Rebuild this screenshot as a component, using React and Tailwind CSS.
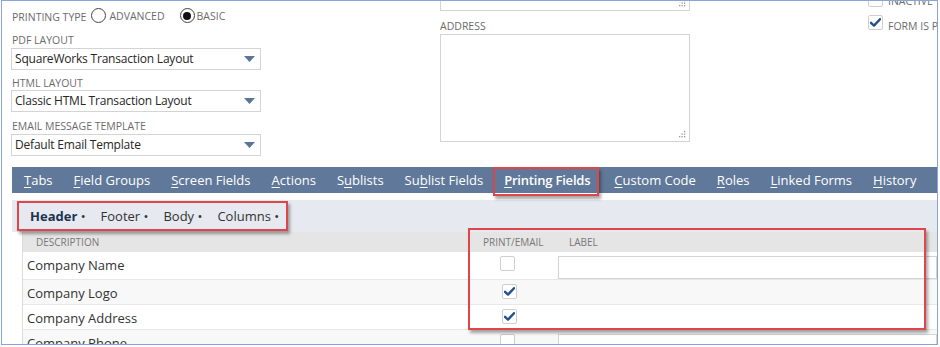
import React from "react";

const Check = () => (
  <svg width="11" height="9" viewBox="0 0 11 9" className="block">
    <path d="M1 4.8 L4 7.6 L10 1.2" fill="none" stroke="#24508f" strokeWidth="2.4" strokeLinecap="round" strokeLinejoin="round" />
  </svg>
);

const Box = ({ checked }) => (
  <div className="w-[15px] h-[15px] border border-[#cfcfcf] rounded-[2px] bg-white flex items-center justify-center shrink-0">
    {checked ? <Check /> : null}
  </div>
);

const Grip = () => (
  <svg width="7" height="7" viewBox="0 0 7 7" className="absolute right-[3px] bottom-[3px]">
    <rect x="5" y="0" width="1.3" height="1.3" fill="#999" />
    <rect x="5" y="2.5" width="1.3" height="1.3" fill="#999" />
    <rect x="2.5" y="2.5" width="1.3" height="1.3" fill="#999" />
    <rect x="5" y="5" width="1.3" height="1.3" fill="#999" />
    <rect x="2.5" y="5" width="1.3" height="1.3" fill="#999" />
    <rect x="0" y="5" width="1.3" height="1.3" fill="#999" />
  </svg>
);

const Select = ({ value }) => (
  <div className="w-[250px] h-[22px] border border-[#d4d4d4] bg-white flex items-center justify-between pl-[3px] pr-[5px] ml-[-1px]">
    <span className="text-[12px] tracking-[-0.2px] text-[#262626] leading-none">{value}</span>
    <svg width="11" height="6" viewBox="0 0 11 6"><path d="M0 0 H11 L5.5 6 Z" fill="#5a7599" /></svg>
  </div>
);

const Label = ({ children, className = "" }) => (
  <div className={"text-[10.5px] text-[#6b6b6b] uppercase leading-none " + className}>{children}</div>
);

const Tab = ({ u, rest, pre = "", bold }) => (
  <span className={"text-[13px] text-white leading-none " + (bold ? "font-semibold tracking-[-0.2px] mr-[3px]" : "")}>
    {pre}
    <span className="underline underline-offset-[2px] decoration-[1px]">{u}</span>
    {rest}
  </span>
);

const rows = [
  { name: "Company Name", checked: false, input: true, h: "h-[28px]", bg: "bg-white" },
  { name: "Company Logo", checked: true, input: false, h: "h-[25px]", bg: "bg-[#f8f8f8]" },
  { name: "Company Address", checked: true, input: false, h: "h-[25px]", bg: "bg-white" },
  { name: "Company Phone", checked: false, input: true, h: "h-[25px]", bg: "bg-[#f8f8f8]" },
];

export default function App() {
  return (
    <div className="w-[940px] h-[347px] bg-white overflow-hidden pl-[1px]" style={{ fontFamily: "'Open Sans', 'Noto Sans', sans-serif" }}>
      <div className="relative w-[937px] h-[345px] border border-[#89a5d6] overflow-hidden flex flex-col">
        {/* top form */}
        <div className="h-[166px] flex shrink-0">
          <div className="w-[260px] ml-[10px] flex flex-col shrink-0">
            <div className="h-[15px] mt-[7px] flex items-center">
              <span className="text-[10.5px] text-[#6b6b6b] leading-none mt-[4px]">PRINTING TYPE</span>
              <div className="w-[15px] h-[15px] ml-[5px] rounded-full border border-[#444] bg-white shrink-0" />
              <span className="text-[10.5px] text-[#6b6b6b] leading-none ml-[3px] mt-[1px]">ADVANCED</span>
              <div className="w-[15px] h-[15px] ml-[15px] rounded-full border border-[#444] bg-white flex items-center justify-center shrink-0">
                <div className="w-[8px] h-[8px] rounded-full bg-[#111]" />
              </div>
              <span className="text-[10.5px] text-[#6b6b6b] leading-none ml-[2px] mt-[1px]">BASIC</span>
            </div>
            <Label className="mt-[12px]">PDF Layout</Label>
            <div className="mt-[2px]"><Select value="SquareWorks Transaction Layout" /></div>
            <Label className="mt-[8px]">HTML Layout</Label>
            <div className="mt-[2px]"><Select value="Classic HTML Transaction Layout" /></div>
            <Label className="mt-[9px]">Email Message Template</Label>
            <div className="mt-[2px]"><Select value="Default Email Template" /></div>
          </div>
          <div className="w-[250px] ml-[168px] flex flex-col shrink-0">
            <div className="relative h-[10px] border-x border-b border-[#d4d4d4]"><Grip /></div>
            <Label className="mt-[10px]">Address</Label>
            <div className="relative mt-[2px] h-[108px] border border-[#d4d4d4]"><Grip /></div>
          </div>
          <div className="ml-[178px] mt-[-9px] flex flex-col gap-[8px] shrink-0">
            <div className="flex items-end gap-[5px]">
              <Box />
              <span className="text-[10.5px] text-[#6b6b6b] leading-none mb-[1px]">INACTIVE</span>
            </div>
            <div className="flex items-end gap-[5px]">
              <Box checked />
              <span className="text-[10.5px] text-[#6b6b6b] leading-none whitespace-nowrap mb-[-1px]">FORM IS PREFERRED</span>
            </div>
          </div>
        </div>

        {/* tab bar */}
        <div className="h-[26px] ml-[10px] bg-[#607899] flex items-center gap-[21px] pl-[12px] shrink-0 whitespace-nowrap">
          <Tab u="T" rest="abs" />
          <Tab u="F" rest="ield Groups" />
          <Tab u="S" rest="creen Fields" />
          <Tab u="A" rest="ctions" />
          <Tab pre="S" u="u" rest="blists" />
          <Tab pre="Su" u="b" rest="list Fields" />
          <Tab u="P" rest="rinting Fields" bold />
          <Tab u="C" rest="ustom Code" />
          <Tab u="R" rest="oles" />
          <Tab u="L" rest="inked Forms" />
          <Tab u="H" rest="istory" />
        </div>

        {/* sub tabs */}
        <div className="h-[32px] mt-[7px] ml-[10px] bg-[#e6e9ef] flex items-center gap-[15px] pl-[18px] shrink-0">
          <span className="text-[13px] font-bold text-[#1d3250] leading-none">Header <span className="text-[#333] font-normal">•</span></span>
          <span className="text-[13px] text-[#333] leading-none">Footer •</span>
          <span className="text-[13px] text-[#333] leading-none">Body •</span>
          <span className="text-[13px] text-[#333] leading-none">Columns •</span>
        </div>

        {/* table */}
        <div className="ml-[20px] border-l border-[#dcdcdc] flex flex-col">
          <div className="h-[20px] bg-[#e5e5e5] flex items-center">
            <div className="w-[448px] pl-[13px] text-[10px] text-[#777] leading-none">DESCRIPTION</div>
            <div className="w-[89px] pl-[12px] text-[10px] text-[#777] leading-none">PRINT/EMAIL</div>
            <div className="pl-[9px] text-[10px] text-[#777] leading-none">LABEL</div>
          </div>
          {rows.map((r) => (
            <div key={r.name} className={"flex items-start border-b border-[#e8e8e8] " + r.h + " " + r.bg}>
              <div className="w-[448px] pl-[4px] pt-[5px] text-[13px] text-[#333] leading-[16px]">{r.name}</div>
              <div className="w-[89px] pl-[31px] pt-[4px]"><Box checked={r.checked} /></div>
              {r.input ? <div className="w-[380px] h-[23px] mt-[4px] border border-[#d4d4d4] bg-white" /> : null}
            </div>
          ))}
        </div>

        {/* annotation boxes */}
        <div className="absolute left-[491px] top-[166px] w-[106px] h-[29px] border-2 border-[#e0454a] shadow-[2px_3px_3px_rgba(0,0,0,0.35)]" />
        <div className="absolute left-[15px] top-[200px] w-[271px] h-[30px] border-2 border-[#e0454a] shadow-[2px_3px_3px_rgba(0,0,0,0.35)]" />
        <div className="absolute left-[466px] top-[227px] w-[458px] h-[102px] border-2 border-[#e0454a] shadow-[2px_3px_3px_rgba(0,0,0,0.35)]" />
      </div>
    </div>
  );
}
